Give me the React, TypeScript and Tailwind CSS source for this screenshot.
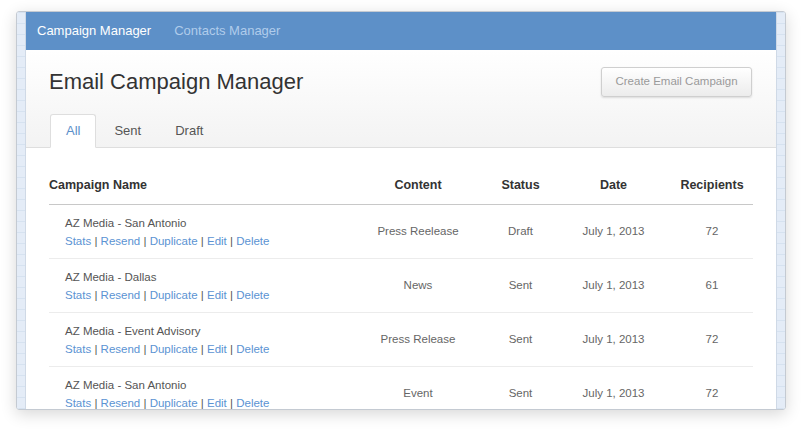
import React from 'react';

const rows = [
  { name: 'AZ Media - San Antonio', content: 'Press Reelease', status: 'Draft', date: 'July 1, 2013', recipients: 72 },
  { name: 'AZ Media - Dallas', content: 'News', status: 'Sent', date: 'July 1, 2013', recipients: 61 },
  { name: 'AZ Media - Event Advisory', content: 'Press Release', status: 'Sent', date: 'July 1, 2013', recipients: 72 },
  { name: 'AZ Media - San Antonio', content: 'Event', status: 'Sent', date: 'July 1, 2013', recipients: 72 },
];

const actions = ['Stats', 'Resend', 'Duplicate', 'Edit', 'Delete'];

const cols = 'grid grid-cols-[302px_134px_71px_115px_82px]';

const Strip: React.FC<{ side: 'left' | 'right' }> = ({ side }) => (
  <div
    className={`w-[9px] shrink-0 bg-[repeating-linear-gradient(0deg,#d6e2f0_0px,#d6e2f0_1px,#e4ecf7_1px,#e4ecf7_11px)] ${
      side === 'left' ? 'border-r border-[#cfd9e6]' : 'border-l border-[#cfd9e6]'
    }`}
  />
);

const App: React.FC = () => {
  return (
    <div className="w-[802px] h-[432px] bg-white pt-[11px] pl-[16px] font-['Liberation_Sans',Arial,sans-serif]">
      <div className="flex w-[770px] h-[399px] rounded-[3px] border border-[#c4cad2] overflow-hidden shadow-[0_4px_16px_rgba(0,0,0,0.16)]">
        <Strip side="left" />

        <div className="flex-1 flex flex-col bg-white overflow-hidden">
          {/* top nav */}
          <nav className="h-[38px] shrink-0 bg-[#5d90c8] flex items-center gap-[23px] pl-[11px] text-[13px]">
            <span className="text-white">Campaign Manager</span>
            <span className="text-[#b0cceb]">Contacts Manager</span>
          </nav>

          {/* page header */}
          <div className="shrink-0 bg-linear-to-b from-white to-[#f3f3f3] border-b border-[#dedede]">
            <div className="flex items-center justify-between pl-[23px] pr-[24px] pt-[17px]">
              <h1 className="text-[22px] leading-[26px] text-[#333]">Email Campaign Manager</h1>
              <button className="w-[151px] h-[30px] rounded-[3px] border border-[#cfcfcf] bg-linear-to-b from-white to-[#ececec] text-[11.5px] text-[#9a9a9a] shadow-[0_1px_2px_rgba(0,0,0,0.12)]">
                Create Email Campaign
              </button>
            </div>
            <div className="flex mt-[17px] pl-[24px] text-[13px] h-[33px]">
              <div className="-mb-px h-[34px] px-[15px] flex items-center mr-[2px] bg-white border border-[#dedede] border-b-white rounded-t-[3px] text-[#5b8fca]">
                All
              </div>
              <div className="h-[34px] px-[16px] flex items-center mr-[2px] text-[#555]">Sent</div>
              <div className="h-[34px] px-[16px] flex items-center text-[#555]">Draft</div>
            </div>
          </div>

          {/* table */}
          <div className="pl-[23px] pt-[19px]">
            <div className="w-[704px]">
              <div className={`${cols} h-[38px] items-center border-b border-[#c8c8c8] text-[12.5px] font-bold text-[#333]`}>
                <div>Campaign Name</div>
                <div className="text-center">Content</div>
                <div className="text-center">Status</div>
                <div className="text-center">Date</div>
                <div className="text-center">Recipients</div>
              </div>
              {rows.map((r, i) => (
                <div
                  key={i}
                  className={`${cols} h-[54px] items-center border-b border-[#ececec] text-[11.5px] text-[#666]`}
                >
                  <div className="pl-[16px] leading-[18px]">
                    <div className="text-[#555]">{r.name}</div>
                    <div>
                      {actions.map((a, j) => (
                        <React.Fragment key={a}>
                          {j > 0 && <span className="text-[#555]"> | </span>}
                          <span className="text-[#5b93d3]">{a}</span>
                        </React.Fragment>
                      ))}
                    </div>
                  </div>
                  <div className="text-center">{r.content}</div>
                  <div className="text-center">{r.status}</div>
                  <div className="text-center">{r.date}</div>
                  <div className="text-center">{r.recipients}</div>
                </div>
              ))}
            </div>
          </div>
        </div>

        <Strip side="right" />
      </div>
    </div>
  );
};

export default App;
